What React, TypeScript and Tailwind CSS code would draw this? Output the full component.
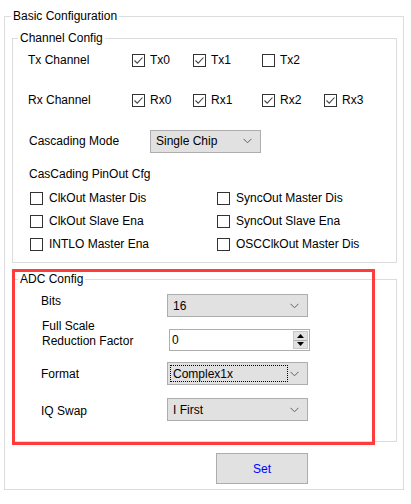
import React from "react";

const font = { fontFamily: '"Liberation Sans", Arial, sans-serif' };

function Check({ checked }: { checked?: boolean }) {
  return (
    <span className="flex h-[13px] w-[13px] shrink-0 items-center justify-center border border-[#333333] bg-white">
      {checked && (
        <svg width="11" height="11" viewBox="0 0 11 11">
          <path d="M1.5 5.5 L4.2 8.2 L9.5 2.5" fill="none" stroke="#444444" strokeWidth="1.1" />
        </svg>
      )}
    </span>
  );
}

function Chevron() {
  return (
    <svg width="9" height="6" viewBox="0 0 9 6" className="shrink-0">
      <path d="M0.5 0.8 L4.5 4.8 L8.5 0.8" fill="none" stroke="#606060" strokeWidth="1" />
    </svg>
  );
}

function Select({ value, width, focused }: { value: string; width: string; focused?: boolean }) {
  return (
    <div className={`flex h-[23px] ${width} items-center border border-[#adadad] bg-[#e1e1e1] pr-[8px]`}>
      <div className="flex-1 p-[2px]">
        <div className={`flex h-[17px] items-center pl-[2px] ${focused ? "border border-dotted border-black" : "border border-transparent"}`}>
          {value}
        </div>
      </div>
      <Chevron />
    </div>
  );
}

function Box({ label, checked, width }: { label: string; checked?: boolean; width?: string }) {
  return (
    <div className={`flex items-center ${width ?? ""}`}>
      <Check checked={checked} />
      <span className="ml-[5px]">{label}</span>
    </div>
  );
}

function PinBox({ label }: { label: string }) {
  return (
    <div className="flex items-center">
      <Check />
      <span className="ml-[6px]">{label}</span>
    </div>
  );
}

export default function App() {
  return (
    <div className="h-[504px] w-[411px] bg-white text-[12px] leading-[14px] text-black" style={font}>
      <div className="pt-[9px]">
        <fieldset className="ml-[4px] w-[400px] border border-[#dcdcdc]">
          <legend className="ml-[6px] px-[2px] leading-[14px]">Basic Configuration</legend>

          <fieldset className="ml-[7px] mt-[8px] w-[385px] border border-[#dcdcdc] pb-[7px]">
            <legend className="ml-[5px] px-[2px] leading-[14px]">Channel Config</legend>

            <div className="mt-[5px] flex h-[20px] items-center pl-[15px]">
              <span className="w-[104px]">Tx Channel</span>
              <Box label="Tx0" checked width="w-[61px]" />
              <Box label="Tx1" checked width="w-[69px]" />
              <Box label="Tx2" width="w-[62px]" />
            </div>

            <div className="mt-[20px] flex h-[20px] items-center pl-[15px]">
              <span className="w-[104px]">Rx Channel</span>
              <Box label="Rx0" checked width="w-[61px]" />
              <Box label="Rx1" checked width="w-[69px]" />
              <Box label="Rx2" checked width="w-[62px]" />
              <Box label="Rx3" checked />
            </div>

            <div className="mt-[20px] flex h-[22px] items-center pl-[16px]">
              <span className="w-[121px]">Cascading Mode</span>
              <Select value="Single Chip" width="w-[111px] h-[22px]" />
            </div>

            <div className="mt-[15px] pl-[16px]">CasCading PinOut Cfg</div>

            <div className="mt-[6px] grid grid-cols-[187px_1fr] gap-y-[1px] pl-[17px]">
              <div className="flex h-[22px] items-center"><PinBox label="ClkOut Master Dis" /></div>
              <div className="flex h-[22px] items-center"><PinBox label="SyncOut Master Dis" /></div>
              <div className="flex h-[22px] items-center"><PinBox label="ClkOut Slave Ena" /></div>
              <div className="flex h-[22px] items-center"><PinBox label="SyncOut Slave Ena" /></div>
              <div className="flex h-[22px] items-center"><PinBox label="INTLO Master Ena" /></div>
              <div className="flex h-[22px] items-center"><PinBox label="OSCClkOut Master Dis" /></div>
            </div>
          </fieldset>

          <div className="relative">
            <fieldset className="ml-[7px] mt-[9px] w-[385px] border border-[#dcdcdc] pb-[20px]">
              <legend className="ml-[5px] px-[2px] leading-[14px]">ADC Config</legend>

              <div className="mt-[8px] flex items-start pl-[28px]">
                <span className="w-[126px]">Bits</span>
                <Select value="16" width="w-[141px]" />
              </div>

              <div className="mt-[2px] flex items-start pl-[29px]">
                <span className="w-[127px] leading-[15px]">
                  Full Scale
                  <br />
                  Reduction Factor
                </span>
                <div className="mt-[10px] flex h-[22px] w-[141px] items-center border border-[#adadad] bg-white">
                  <span className="flex-1 pl-[2px]">0</span>
                  <div className="mr-[1px] flex h-[18px] w-[15px] flex-col border border-[#c8c8c8] bg-[#e1e1e1]">
                    <div className="flex flex-1 items-center justify-center border-b border-[#adadad]">
                      <svg width="7" height="4" viewBox="0 0 7 4"><path d="M0 4 L3.5 0 L7 4 Z" fill="#000" /></svg>
                    </div>
                    <div className="flex flex-1 items-center justify-center">
                      <svg width="7" height="4" viewBox="0 0 7 4"><path d="M0 0 L3.5 4 L7 0 Z" fill="#000" /></svg>
                    </div>
                  </div>
                </div>
              </div>

              <div className="mt-[11px] flex items-center pl-[28px]">
                <span className="w-[126px]">Format</span>
                <Select value="Complex1x" width="w-[141px]" focused />
              </div>

              <div className="mt-[13px] flex items-center pl-[28px]">
                <span className="w-[126px] pt-[3px]">IQ Swap</span>
                <Select value="I First" width="w-[141px]" />
              </div>
            </fieldset>

            <div className="pointer-events-none absolute left-[7px] top-[-3px] h-[176px] w-[363px] border-[3px] border-[#ff3b3b]" />
          </div>

          <div className="mb-[5px] ml-[211px] mt-[11px] flex h-[31px] w-[92px] items-center justify-center border border-[#adadad] bg-[#e1e1e1] text-[#0000ff]">
            Set
          </div>
        </fieldset>
      </div>
    </div>
  );
}
